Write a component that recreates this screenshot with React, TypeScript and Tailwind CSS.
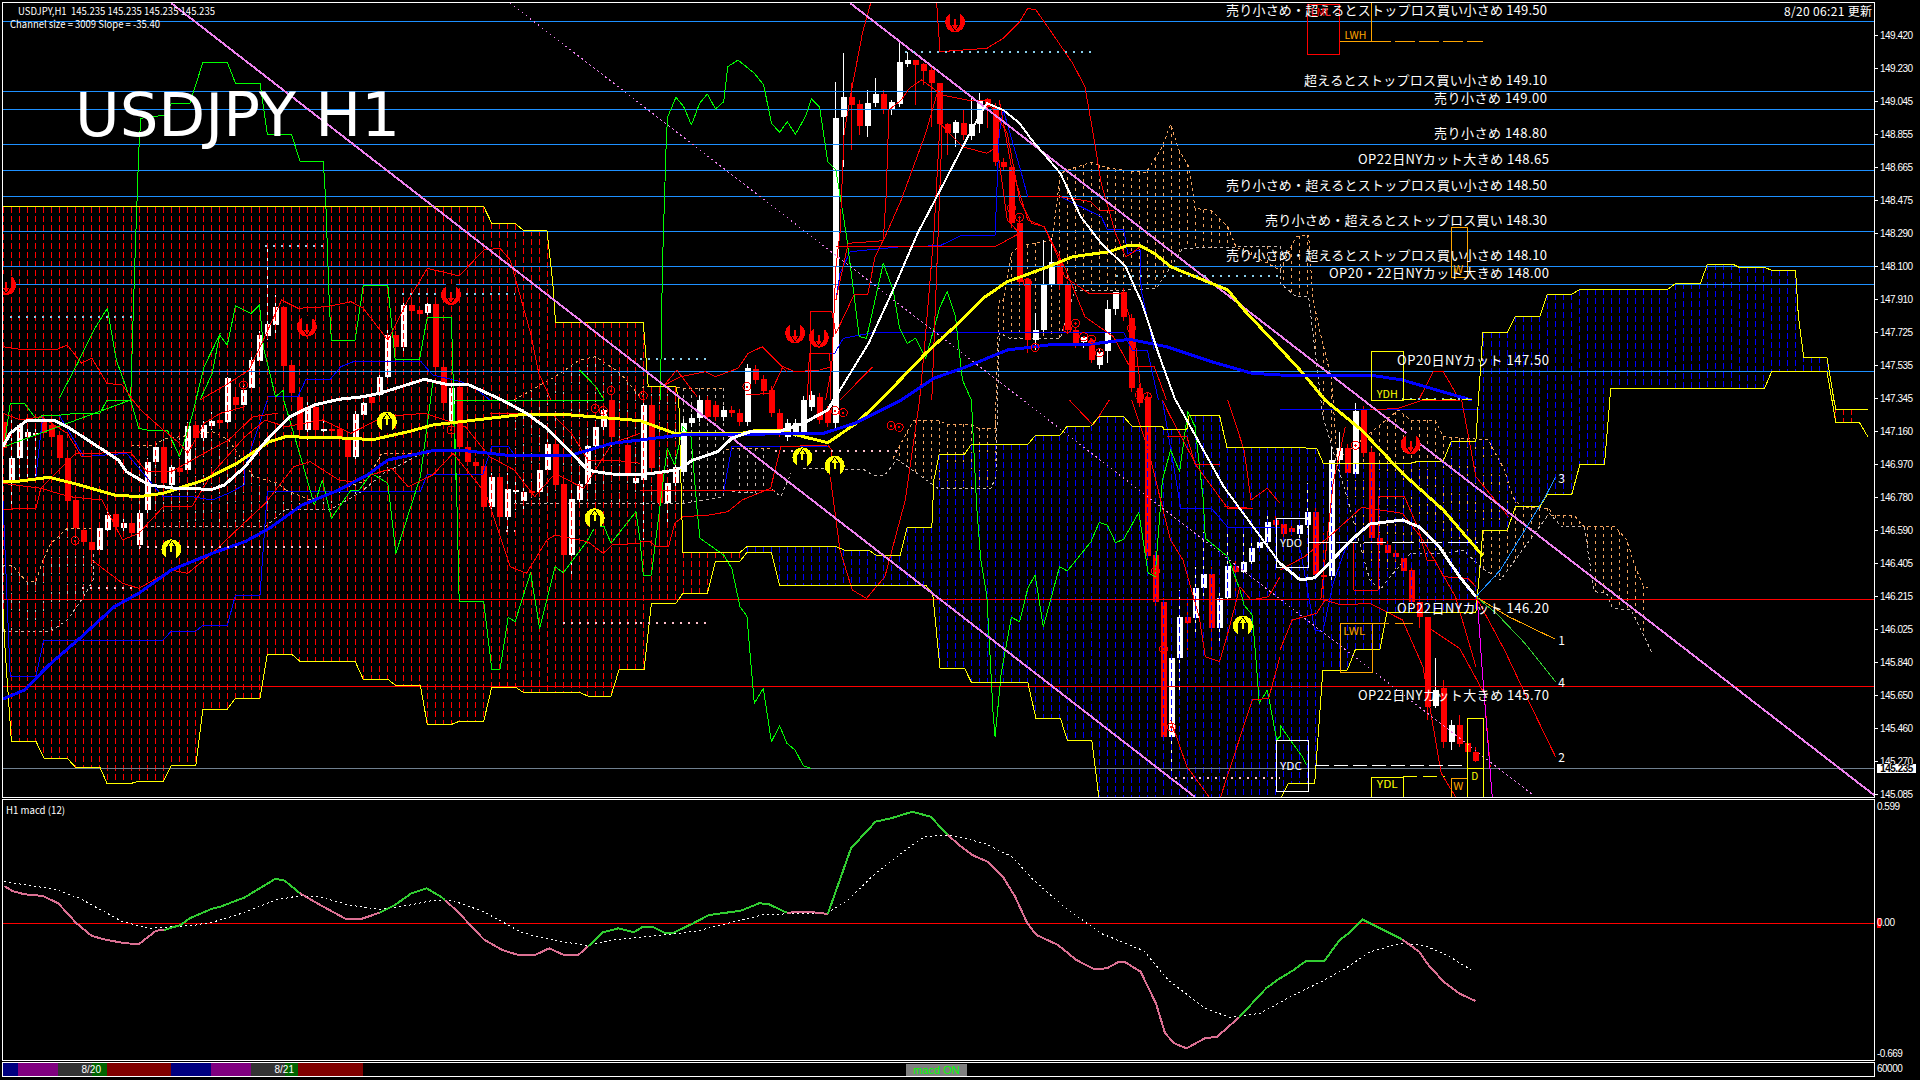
import React from "react";

type Seg = [string, number[]];
const ZONES: Record<string, [number, number, number]> = {
  A: [0, 0, 2.45], B: [640, 0, 2.45], C: [1280, 0, 2.45],
  D: [0, 400, 2.45], E: [640, 400, 2.45], F: [1280, 400, 2.45],
  G: [0, 780, 1.6333], H: [960, 780, 1.6333],
};
const conv = (segs: Seg[]) => {
  const out: [number, number][] = [];
  segs.forEach(([z, n]) => {
    const [x0, y0, sx] = ZONES[z];
    for (let i = 0; i < n.length; i += 2) out.push([x0 + n[i] / sx, y0 + n[i + 1] / 3]);
  });
  return out;
};
const ps = (segs: Seg[]) => conv(segs).map((p) => p[0].toFixed(1) + "," + p[1].toFixed(1)).join(" ");
const pt = (z: string, x: number, y: number) => conv([[z, [x, y]]])[0];
const interp = (p: [number, number][], x: number) => {
  if (x < p[0][0] || x > p[p.length - 1][0]) return null;
  for (let i = 1; i < p.length; i++) {
    if (x <= p[i][0]) {
      const d = p[i][0] - p[i - 1][0];
      return d <= 0 ? p[i][1] : p[i - 1][1] + ((p[i][1] - p[i - 1][1]) * (x - p[i - 1][0])) / d;
    }
  }
  return null;
};

const S1: Seg[] = [
  ["D", [7,620,12,740,28,1024,88,1024,108,1075,165,1075,185,1102,245,1102,262,1150,322,1150,340,1144,400,1144,420,1096,480,1096,497,928,557,928,577,895,637,895,655,763,715,763,735,784,870,784,890,838,950,838,970,857,1030,857,1047,973,1107,973,1125,964,1185,964,1205,861,1262,861,1282,877,1420,877,1440,888,1497,888,1517,808,1568,808]],
  ["E", [10,808,28,610,88,610,105,580,165,580,185,484,245,484,262,457,322,457,342,556,700,556,717,580,735,805,795,805,812,847,950,847,970,955,1030,955,1047,1021,1107,1021,1125,1200]],
  ["F", [0,1200,20,1150,85,1150,105,810,165,810,185,748,245,748,262,636,480,636,490,500,497,390,557,390,577,320,637,320,655,283,715,283,735,193,795,193,808,0]],
  ["C", [810,1165,1187,1165,1205,1114,1340,1114]],
  ["F", [1362,68,1420,68,1440,110]],
];
const S2: Seg[] = [
  ["A", [7,620,1185,620,1205,670,1262,670,1282,691,1340,691,1350,800,1355,860,1361,967,1568,967]],
  ["B", [8,967,20,1160,88,1160]],
  ["E", [95,0,105,457,245,457,262,440,480,440,500,450,560,450,580,467,637,467,655,382,715,382,720,240,733,163,795,163,812,133,950,133,970,105,1030,105,1045,80,1105,78,1125,50,1185,50,1205,78,1280,78,1283,88,1340,88,1345,47,1420,47,1438,142,1568,142]],
  ["F", [90,145,106,190,322,190,340,183,400,183,420,123,480,123,485,20,497,-203]],
  ["C", [557,997,577,948,637,948,655,883,715,883,735,868,950,868,970,850,1030,850,1047,793,1110,793,1125,802,1187,802,1203,810,1263,810,1270,950,1283,1072,1340,1072,1345,1110,1357,1200]],
  ["F", [1362,28,1440,28]],
];

const orange = "#f4a460";
const pale = "#c8b8b0";
const CL2: { u: Seg[]; l: Seg[]; c: string }[] = [
  { u: [["D", [7,495,30,495,65,545,88,545,105,480,125,430,165,385,225,385]]], l: [["D", [7,693,125,693,165,660,205,590,228,540,228,460]]], c: pale },
  { u: [["D", [320,135,380,135,400,118,520,95,560,120,620,228,680,250,700,270]]], l: [["D", [340,380,650,380,700,328]]], c: pale },
  { u: [["D", [700,270,760,300,830,270,900,240,935,160,1050,160]]], l: [["D", [700,328,810,328,880,280,940,220,1050,150]]], c: "#e8d8c8" },
  { u: [["A", [1260,1200,1360,1130,1420,1080,1460,1070,1520,1120,1568,1190]], ["B", [8,1160,88,1160,100,1165,205,1165]]], l: [["A", [1260,1510,1568,1510]], ["B", [8,1510,110,1510,205,1490]]], c: pale },
  { u: [["E", [210,150,225,145,320,145]]], l: [["E", [225,275,290,280,320,265,345,290,370,220]]], c: pale },
  { u: [["E", [620,175,670,60,730,60,750,72,810,72,830,85,870,85,880,-300]], ["B", [890,900,910,760,930,738,1010,720,1030,520,1060,505,1105,487,1150,505,1240,518,1280,440,1300,372,1320,450,1345,500,1360,625,1400,632,1440,680,1460,740,1568,810]], ["C", [0,810,40,710,70,705,80,890,95,980,125,1130,130,1200]], ["F", [140,180,290,30,320,60,380,60,400,110,510,120,550,210,570,290,590,320,660,325,665,345,720,345,745,380,820,380,850,420,870,500,890,558,910,568]]],
    l: [["E", [400,205,550,210,570,225,600,225,630,178,730,265,860,265,872,230,880,-200]], ["B", [905,1015,1030,1015,1065,870,1190,870,1265,865,1330,745,1568,738]], ["C", [0,850,40,890,70,890]], ["F", [105,50,165,295,220,540,245,570,270,530,320,460,400,460,450,450,490,500,540,540,600,440,660,340,690,380,745,380,770,575,800,580,815,625,860,630,885,690,910,755]]], c: orange },
];

const REDS: Seg[][] = [
  [["A", [7,1040,60,1050,140,1048,165,1035,200,1090,225,1075,262,1150,300,1155,325,1200]], ["D", [345,30,400,90,440,130,460,160,500,70,540,40,600,20]]],
  [["A", [490,1200,560,1150,610,1110,645,1020,690,900,730,925,800,920,860,905,890,925,950,1020,1000,900,1047,805,1125,828,1185,750,1225,745,1250,780,1300,1000,1320,1120,1350,1200]]],
  [["D", [7,40,50,60,100,50,165,100,200,170,225,170,225,480,300,550,340,565,420,510,460,520,520,460,580,390,650,310,720,200,760,185,830,240,860,245,960,205,1000,260,1060,225,1110,160,1190,280,1250,500,1290,520,1340,420,1360,405,1440,425,1478,460,1500,435,1568,430]]],
  [["D", [7,250,100,265,170,290,250,300,300,420,340,400,400,320,470,320,520,220,600,110,650,60,700,80,790,60,860,100,940,50,1040,40,1140,80,1200,170,1260,210,1310,290,1360,220,1430,265,1500,130,1568,100]]],
  [["D", [7,328,88,325,100,265,185,160,320,158,360,215,420,215,500,160,560,120,620,50,680,40]]],
  [["D", [1200,40,1350,40,1400,100,1440,180,1500,180,1568,190]]],
  [["B", [565,10,545,100,520,260,500,400,490,700,480,800,470,1100,455,1200]]],
  [["B", [727,10,735,155,850,145,890,115,930,65,950,25,970,30,1010,100,1060,190,1090,260,1110,400,1130,550,1165,700,1190,770,1205,760,1225,740]]],
  [["B", [417,1200,417,935,470,935,480,1000,525,883,558,883,576,770,596,720,603,590,610,330,640,300,660,265,690,240,740,285,800,300,850,300,900,400,930,600,960,670,990,680,1020,760,1040,830,1100,880,1180,880,1210,990,1230,1200]]],
  [["B", [480,900,510,730,596,722,640,600,700,400,735,250,740,400,715,1200]]],
  [["B", [685,1200,700,1000,720,700,735,370,790,440,850,460,875,440,900,660,930,700,870,740,480,740]]],
  [["B", [410,1200,415,1060,465,1060,468,1200]]],
  [["B", [570,1100,490,1200]]],
  [["B", [260,1185,320,1180,350,1100,380,1115,440,1110,470,1100]]],
  [["B", [140,1190,90,1110,60,1155,100,1130,160,1115,185,1130,240,1105,265,1060,300,1040,360,1115]]],
  [["B", [950,590,1030,590,1105,605,1125,630,1160,630]]],
  [["B", [880,300,910,500,950,660,990,680,1040,800,1090,950,1160,1010,1200,1100,1260,1100,1290,1200]]],
  [["E", [685,0,650,300,600,530,555,595,520,570,490,450,465,220,470,150,460,135,345,140,320,265,250,300,215,335,170,345,105,350,85,370,70,440,40,440,25,425,0,425]]],
  [["E", [1052,0,1075,30,1110,75,1150,0]]],
  [["E", [1205,0,1245,150,1300,420,1330,480,1370,650,1385,770,1420,785,1440,700,1470,560,1497,600,1540,590,1568,530]]],
  [["E", [1280,0,1300,50,1365,200,1440,325,1500,325,1430,320]]],
  [["E", [1440,0,1480,150,1497,300,1537,265,1568,310]]],
  [["E", [1300,960,1340,1100,1400,1200]]],
  [["E", [1420,1200,1500,900,1540,895,1568,770]]],
  [["E", [0,270,330,272]]],
  [["E", [1290,110,1340,110,1360,192,1420,192]]],
  [["F", [0,750,30,660,90,640,110,600,150,615,220,610,300,660,350,800,395,1120,430,1190]]],
  [["F", [180,430,180,570,240,570,240,290,305,290,340,390,360,480,380,480,400,530,460,535,480,560]]],
  [["F", [360,680,440,745,500,880,515,1100]]],
  [["F", [0,510,60,470,130,400,200,322,300,340,350,420,430,590,480,800]]],
  [["F", [445,0,480,230,560,350]]],
  [["F", [100,600,130,250,160,80]]],
  [["C", [340,1200,375,1115,400,1115,440,1200]]],
  [["F", [440,0,350,0,290,25,220,30]]],
];
const BLUES: Seg[][] = [
  [["D", [7,295,25,830,88,830,107,720,400,720,420,693,480,693,497,676,557,676,577,585,637,585,655,275,1030,275,1047,222,1183,222,1205,138,1245,138,1260,165]]],
  [["D", [88,230,105,45,145,45,205,170,310,160,375,255,400,290,470,290,520,300,560,280,598,255,598,210,655,0]]],
  [["A", [655,1188,730,1190,750,1137,810,1137,835,1100,870,1083,1030,1083,1060,1125,1130,1145,1165,1165,1200,1200]]],
  [["B", [418,1200,418,1060,477,1060,498,1015,575,997,1185,997,1205,1050,1243,1050,1270,1200]]],
  [["B", [480,900,490,820,515,755,640,740,735,737,790,705,870,705,880,400,890,330,930,500,950,590,1030,590,1130,650,1145,688,1185,688,1195,760,1225,750,1228,870,1260,1050]]],
  [["E", [205,275,225,140,460,140]]],
  [["E", [1280,0,1325,325,1400,325,1440,382,1568,382]]],
  [["F", [0,28,490,28]]],
  [["F", [50,450,85,690,105,695,130,550,165,430]]],
];
const GREENS: Seg[][] = [
  [["A", [320,1200,330,800,340,450,345,355,405,345,420,310,465,310,497,187,557,187,577,250,637,250,655,402,714,402,735,484,792,484,798,600,807,920,812,1020,870,1020,890,856,950,856,968,1077,1028,1077,1047,951,1106,951,1110,1130,1112,1200]], ["D", [1120,330,1125,605,1185,605,1205,808,1225,808,1245,652,1262,665,1300,518,1322,685,1360,500,1380,518,1440,420,1458,380,1480,380,1497,430,1558,335,1568,420]], ["E", [8,525,28,525,67,145,85,195,105,80,125,110,140,330,147,415,205,465,225,505,245,620,262,648,280,910,302,865,322,1025,342,977,360,1030,380,1050,400,1097,418,1105]]],
  [["A", [145,1195,190,1090,230,990,263,925,285,1080,320,1200]], ["D", [10,140,25,10,60,10,90,60,105,45,150,45,185,40,245,40,262,0,320,0,340,85,360,90,410,90,440,170,470,50,500,-100,540,-200]]],
  [["A", [490,1200,520,1120,538,1005,557,1035,577,918,615,940,636,915,645,1040,675,1190,695,1170]], ["D", [695,0,740,185,770,315,790,240,812,355,860,270,880,270,910,220,950,250,970,460,1030,230,1060,-50]]],
  [["B", [50,1200,55,800,65,400,68,350,88,292,107,320,126,375,146,310,165,282,185,327,205,305,215,200,240,180,280,220,303,255,322,370,342,397,361,365,381,403,405,350,420,297,440,322,460,485,480,510,505,700,525,890,537,1010,555,1015,596,790,620,870,636,985,655,1030,675,1015,700,1075,735,920,753,875,773,950,790,1140,810,1195]], ["E", [812,0,825,320,835,480,850,590,865,940,870,1010,885,820,910,652,930,665,950,565,968,525,988,680,1028,500,1047,513,1105,425,1125,367,1145,375,1165,428,1185,418,1222,337,1245,520,1262,530,1280,240,1300,150,1322,215,1342,35,1360,80,1380,300,1385,415,1440,470,1470,570,1480,615,1500,645,1510,790,1517,910,1537,870,1560,1020,1568,1010]], ["F", [0,975,25,1020,55,1070,65,1096]]],
  [["A", [1420,1110,1460,1160,1480,1200]], ["D", [1110,0,1120,330]]],
];

// [x, top, bottom, white?, high?, low?]
type C = number[];
const CANDLES: [string, C[]][] = [
  ["D", [
    [12,65,145,0],[28,175,240,1,60,330],[48,75,175,1,70,230],[68,95,110,1,70,230],[88,100,105,1,70,230],[107,60,100,0],[126,75,110,0],[146,105,175,0],[165,175,302,0],[185,300,385,0,300,400],[205,390,425,0],[224,425,450,0],[243,385,450,1],[263,345,390,1],[283,342,382,0],[302,368,385,1,340,400],[322,370,400,0],[342,340,435,1],[361,185,330,1],[380,142,185,1],[400,142,250,0],[420,200,255,1],[439,205,215,0],[459,78,210,1],[478,75,115,0],[498,75,115,1],[518,62,78,1,35,90],[537,60,68,0],[557,-65,65,1,-70,75],[577,-10,15,0],[597,-30,15,1],[616,-120,-35,1],[636,-195,-118,1],[655,-228,-192,1,-460,-180],[675,-280,-225,1,-315,-200],[695,-280,-103,0,-280,-60],[714,-105,-20,0],[734,-10,90,0,-20,110],[753,22,90,1,-10,120],[773,22,90,0],[792,88,90,1,60,110],[812,88,92,0],[832,88,115,0],[851,115,170,0,100,260],[871,42,170,1],[890,10,45,1],[910,-10,10,0],[930,-70,-15,1],[950,-195,-70,1,-225,-50],[969,-195,-160,0],[988,-285,-160,1],[1008,-285,-268,0],[1028,-270,-258,0],[1047,-288,-260,1],[1067,-288,-100,0],[1087,-100,10,0],[1107,-35,70,1],[1126,-40,140,0],[1146,140,185,0],[1165,185,197,0],[1185,197,322,0],[1204,232,322,1],[1224,232,352,0],[1243,268,350,1,220,395],[1263,270,274,1,230,330],[1283,275,302,1,240,345],[1302,272,275,0],[1322,210,275,1],[1341,132,210,1],[1361,132,255,0],[1381,252,465,0,225,670],[1400,298,465,1,270,540],[1420,253,300,1],[1439,138,253,1],[1459,82,138,1],[1478,30,82,1],[1498,0,110,0],[1517,125,130,0],[1537,135,222,0],[1556,235,250,1],
  ]],
  ["E", [
    [8,15,240,1,0,420],[28,15,205,0],[48,215,308,0,200,420],[67,250,310,1,240,380],[87,200,250,1],[106,68,215,1],[125,55,70,1],[145,0,55,1],[165,0,50,0],[185,15,50,0],[204,30,52,1],[224,30,40,0],[243,40,65,0],[263,-95,65,1],[283,-92,-60,0],[302,-62,-28,0],[322,-30,40,0],[341,38,100,0],[361,70,110,1],[380,70,100,1],[400,0,100,1],[420,-15,20,1],[439,-10,60,0],[459,30,68,0],[478,-845,70,1,-955,90],
    [498,-908,-848,1,-1040,-700],[518,-908,-885,0,-950,-750],[538,-888,-822,0,-900,-795],[557,-890,-822,1,-930,-790],[577,-918,-890,1,-965,-880],[596,-918,-870,0],[616,-893,-870,1,-900,-855],[636,-1013,-888,1,-1070,-880],[655,-1020,-1008,1,-1045,-1000],[675,-1020,-1005,0,-1020,-885],[695,-1008,-987,0,-1010,-945],[714,-990,-950,0,-1000,-820],[734,-950,-827,0,-950,-780],[753,-827,-802,0,-830,-735],[773,-833,-802,1,-840,-760],[792,-831,-795,0,-870,-780],[812,-827,-792,1,-910,-780],[832,-900,-827,1,-920,-800],[851,-902,-878,0,-905,-815],[871,-878,-713,0],[890,-715,-698,0],[910,-698,-530,0,-700,-515],[930,-530,-355,0],[949,-362,-180,0,-365,-140],[969,-210,-180,1,-260,-150],[988,-345,-210,1,-480,-200],[1008,-415,-345,1,-485,-340],[1028,-415,-345,0,-440,-330],[1047,-345,-210,0],[1067,-210,-170,0,-215,-155],[1087,-190,-175,1,-190,-155],[1106,-180,-120,0,-180,-110],[1126,-145,-105,1],[1145,-273,-148,1,-300,-110],[1165,-323,-272,1,-325,-255],[1185,-325,-250,0],[1204,-245,-35,0],[1224,-35,10,0],[1243,-10,468,0],[1263,465,605,0],[1283,605,1010,0],[1302,775,1010,1,775,1130],[1322,652,775,1,570,880],[1341,652,668,0,600,750],[1361,565,655,1,500,700],[1380,522,565,1,395,600],[1400,522,685,0,500,760],[1420,595,685,1,560,730],[1439,498,595,1,395,600],[1459,497,515,0,480,580],[1478,485,515,1,385,530],[1498,445,485,1,420,500],[1517,425,445,1],[1537,365,425,1,340,440],[1556,360,375,0],
  ]],
  ["F", [
    [8,372,403,0],[28,385,395,0],[48,375,403,1],[67,335,375,1,250,385],[87,335,525,0],[106,525,530,0,400,600],[126,180,527,1,140,545],[146,145,180,1,95,190],[165,145,220,0],[185,32,222,1,10,230],[204,30,158,0],[224,155,415,0],[243,415,435,0],[263,435,458,0],[283,458,472,0],[302,475,512,0],[322,510,605,0],[341,605,650,0,600,685],[361,650,920,0,650,960],[380,870,918,1,775,925],[400,865,1025,0,840,1045],[420,975,1025,1,960,1050],[439,975,1032,0,945,1040],[459,1030,1055,0],[478,1055,1082,0,1040,1085],
  ]],
];

const RINGS: [string, number, number][] = [
  ["D",184,422],["B",262,1160],["A",597,1155],["A",1497,1172],["B",8,1187],["E",478,32],["E",498,38],["E",615,77],["E",635,82],["B",910,625],["B",930,652],["B",949,848],["B",968,1042],["B",1047,985],["B",1067,970],["B",1087,1010],["B",1106,1018],["B",1126,1058],["B",1204,985],["B",1223,1185],["B",1243,1190],["D",1105,90],["D",1458,25],["D",1478,32],["E",1263,513],["E",1283,747],["E",1302,982],["F",185,136],
];
const UPS: [string, number, number][] = [["D",420,448],["D",948,65],["D",1457,355],["E",398,172],["E",477,197],["E",1477,677]];
const DOWNS: [string, number, number][] = [["A",15,855],["A",752,980],["A",1105,885],["B",380,1000],["B",438,1013],["B",772,67],["F",320,133]];

const Sig = ({ z, flip, color }: { z: [string, number, number]; flip: boolean; color: string }) => {
  const [x, y] = pt(z[0], z[1], z[2]);
  return (
    <g transform={`translate(${x.toFixed(1)} ${y.toFixed(1)}) scale(1 ${flip ? -1 : 1})`}>
      <circle r={10} fill={color} />
      <path d="M-5 11 L-5 -2 L-3 -5 L0 -9 L3 -5 L5 -2 L5 11 Z" fill="#000" />
      <path d="M-1 3 L-1 -3 L-3 -3 L0 -8 L3 -3 L1 -3 L1 3 Z" fill={color} />
    </g>
  );
};

const Pl = ({ s, c, w = 1, d }: { s: Seg[]; c: string; w?: number; d?: string }) => (
  <polyline points={ps(s)} fill="none" stroke={c} strokeWidth={w} strokeDasharray={d} strokeLinejoin="round" />
);

const HL = ({ y, c, w = 1 }: { y: number; c: string; w?: number }) => (
  <rect x={3} y={Math.floor(y)} width={1871} height={w} fill={c} />
);

const Dots = ({ z, x1, x2, y, c }: { z: string; x1: number; x2: number; y: number; c: string }) => {
  const a = pt(z, x1, y);
  const b = pt(z, x2, y);
  return <line x1={a[0]} x2={b[0]} y1={a[1]} y2={a[1]} stroke={c} strokeWidth={2} strokeDasharray="2 6" />;
};

const Box = ({ z, x1, y1, x2, y2, c }: { z: string; x1: number; y1: number; x2: number; y2: number; c: string }) => {
  const a = pt(z, x1, y1);
  const b = pt(z, x2, y2);
  return <rect x={Math.round(a[0])} y={Math.round(a[1])} width={Math.round(b[0] - a[0])} height={Math.round(b[1] - a[1])} fill="none" stroke={c} strokeWidth={1} />;
};

const Label = ({ z, x, y, c, w, t }: { z: string; x: number; y: number; c: string; w: number; t: string }) => {
  const a = pt(z, x, y);
  return (
    <text x={a[0]} y={a[1]} fill={c} fontSize={10} textAnchor="middle" dominantBaseline="central" textLength={w} lengthAdjust="spacingAndGlyphs" shapeRendering="auto">
      {t}
    </text>
  );
};

const NOTES: [string, number, number, number][] = [
  ["売り小さめ・超えるとストップロス買い小さめ 149.50", 9.7, 1547, 321],
  ["超えるとストップロス買い小さめ 149.10", 79.7, 1547, 243],
  ["売り小さめ 149.00", 97.7, 1547, 113],
  ["売り小さめ 148.80", 132.3, 1547, 113],
  ["OP22日NYカット大きめ 148.65", 158.3, 1549, 191],
  ["売り小さめ・超えるとストップロス買い小さめ 148.50", 184.3, 1547, 321],
  ["売り小さめ・超えるとストップロス買い 148.30", 219, 1547, 282],
  ["売り小さめ・超えるとストップロス買い小さめ 148.10", 254.3, 1547, 321],
  ["OP20・22日NYカット大きめ 148.00", 272.3, 1549, 220],
  ["OP20日NYカット 147.50", 359, 1549, 152],
  ["OP22日NYカット 146.20", 607.3, 1549, 152],
  ["OP22日NYカット大きめ 145.70", 694.7, 1549, 191],
];

const AXIS = ["149.420","149.230","149.045","148.855","148.665","148.475","148.290","148.100","147.910","147.725","147.535","147.345","147.160","146.970","146.780","146.590","146.405","146.215","146.025","145.840","145.650","145.460","145.270","145.085"];

const MACD: { s: Seg[]; c: string }[] = [
  { c: "#db7093", s: [["G", [7,318,20,333,40,343,70,348,95,370,125,430,150,468,175,480,205,490,227,492,255,452,268,450]]] },
  { c: "#32cd32", s: [["G", [268,450,295,435,310,415,345,387,360,380,400,352,450,296,465,302,490,340]]] },
  { c: "#db7093", s: [["G", [490,340,520,372,565,417,590,417,620,398]]] },
  { c: "#32cd32", s: [["G", [620,398,645,375,672,340,697,325,720,350,727,360]]] },
  { c: "#db7093", s: [["G", [727,360,750,400,790,478,820,510,845,524,875,524,897,505,920,524,945,524,960,500]]] },
  { c: "#32cd32", s: [["G", [960,500,985,457,1010,445,1035,457,1050,440,1065,440,1085,458,1100,458,1130,432,1158,405,1210,392,1240,370,1255,372,1285,398]]] },
  { c: "#db7093", s: [["G", [1285,398,1320,395,1352,402]]] },
  { c: "#32cd32", s: [["G", [1352,402,1390,205,1430,125,1455,115,1490,95,1520,110,1548,165]]] },
  { c: "#db7093", s: [["G", [1548,165,1568,197]], ["H", [20,225,45,245,70,290,90,350,110,430,125,465,160,495,190,540,220,568,240,565,258,547,270,547,295,575,320,670,335,760,350,790,370,805,400,775,420,770,456,712]]] },
  { c: "#32cd32", s: [["H", [456,712,500,625,520,598,545,570,565,543,595,543,620,480,635,460,657,418,722,478]]] },
  { c: "#db7093", s: [["H", [722,478,750,515,765,555,790,605,815,640,842,663]]] },
];
const SIGNAL: Seg[] = [
  ["G", [7,305,90,328,130,355,200,425,245,445,320,435,350,425,395,400,450,360,490,347,520,350,570,375,620,388,670,375,710,360,740,362,790,395,850,455,880,472,920,485,960,497,1000,480,1100,462,1140,452,1200,425,1250,403,1350,400,1385,360,1430,280,1490,195,1510,170,1550,165,1568,172]],
  ["H", [40,190,85,230,120,300,170,380,230,460,300,512,340,600,400,685,440,712,490,700,540,650,590,605,630,565,670,515,720,490,760,497,800,530,835,570]],
];

function MainChart() {
  const s1 = conv(S1);
  const s2 = conv(S2);
  const kumo: React.ReactNode[] = [];
  for (let k = 0; k < 232; k++) {
    const x = 3.5 + 8 * k;
    const a = interp(s1, x);
    const b = interp(s2, x);
    if (a === null || b === null || x > 1870) continue;
    const top = Math.min(a, b);
    const bot = Math.min(Math.max(a, b), 798);
    const col = x < 745 || x > 1830 ? "#ff0000" : "#0000ff";
    kumo.push(<line key={k} x1={x} x2={x} y1={top} y2={bot} stroke={col} strokeDasharray="6 3" />);
  }
  const kumo2: React.ReactNode[] = [];
  CL2.forEach((c, i) => {
    const u = conv(c.u);
    const l = conv(c.l);
    for (let k = 0; k < 232; k++) {
      const x = 3.5 + 8 * k;
      const a = interp(u, x);
      const b = interp(l, x);
      if (a === null || b === null) continue;
      kumo2.push(<line key={i + "-" + k} x1={x} x2={x} y1={a} y2={b} stroke={c.c} strokeDasharray="3 4" />);
    }
    kumo2.push(<Pl key={i + "u"} s={c.u} c={orange} d="3 3" />);
    kumo2.push(<Pl key={i + "l"} s={c.l} c={pale} d="3 3" />);
  });
  const candles: React.ReactNode[] = [];
  CANDLES.forEach(([z, list]) =>
    list.forEach((r, i) => {
      const [zx, t, b, w, hi, lo] = r;
      const p = pt(z, zx, t);
      const k = Math.round((p[0] - 3.5) / 8);
      const X = Math.round(3.5 + 8 * k);
      const q = pt(z, zx, b);
      const h = pt(z, zx, hi === undefined ? t - 12 : hi);
      const l = pt(z, zx, lo === undefined ? b + 12 : lo);
      const col = w ? "#ffffff" : "#ff0000";
      candles.push(
        <g key={z + i}>
          <rect x={X - 1} y={h[1]} width={1} height={Math.max(1, l[1] - h[1])} fill={col} />
          <rect x={X - 3} y={p[1]} width={6} height={Math.max(2, q[1] - p[1])} fill={col} />
        </g>
      );
    })
  );
  const rp = (z: string, y: number) => pt(z, 0, y)[1];
  return (
    <svg viewBox="3 3 1871 794" width={1871} height={794} className="block" shapeRendering="crispEdges">
      {kumo2}
      {candles}
      {kumo}
      {[21, 91, 109, 144, 170, 196, 231, 266, 284, 371].map((y) => (
        <HL key={y} y={y} c="#1e90ff" />
      ))}
      <HL y={599} c="#ff0000" />
      <HL y={686} c="#ff0000" />
      <HL y={768} c="#708090" />

      {BLUES.map((s, i) => <Pl key={i} s={s} c="#0000ff" />)}
      {GREENS.map((s, i) => <Pl key={i} s={s} c="#00ff00" />)}
      {REDS.map((s, i) => <Pl key={i} s={s} c="#ff0000" />)}
      <Pl s={S2} c="#ffff00" />
      <Pl s={S1} c="#ffff00" />

      <line x1={510} y1={3} x2={1533} y2={795} stroke="#ee82ee" strokeDasharray="2 3" />
      <line x1={171} y1={3} x2={1195} y2={797} stroke="#ee82ee" strokeWidth={2} />
      <line x1={850} y1={3} x2={1874} y2={795} stroke="#ee82ee" strokeWidth={2} />
      <Pl s={[["F", [483,590,495,800,520,1190]]]} c="#ff00ff" />

      <Pl c="#ffff00" w={3} s={[["D", [7,243,50,243,120,232,180,250,280,285,340,290,400,280,500,240,580,190,660,125,700,110,870,115,910,120,1000,95,1060,75,1200,55,1290,42,1400,45,1568,62]], ["E", [85,100,250,100,280,92,345,92,400,110,460,128,530,70,590,0]], ["B", [700,1060,780,970,840,895,900,845,1000,800,1060,770,1150,755,1190,738,1225,737,1260,760,1300,800,1380,840,1440,870,1480,930,1568,1045]], ["C", [60,1125,110,1200]], ["F", [200,90,300,220,400,330,497,468]]]} />
      <Pl c="#0000ff" w={3} s={[["D", [7,897,60,870,120,795,200,710,280,620,340,580,420,510,520,460,600,425,660,385,740,315,830,270,900,225,950,180,1060,152,1140,152,1260,168,1400,165,1500,130,1568,120]], ["E", [100,105,450,100,530,68,640,0]], ["B", [720,1135,800,1100,900,1050,1000,1035,1100,1033,1200,1018,1290,1040,1400,1085,1500,1120,1568,1125]], ["C", [180,1128,220,1125,300,1140,440,1190,470,1200]]]} />
      <Pl c="#ffffff" w={3} s={[["D", [7,140,25,100,65,62,130,60,165,80,290,180,310,215,365,255,430,265,520,268,550,255,600,200,650,125,710,50,770,15,830,-2]], ["A", [890,1190,930,1180,1040,1138,1090,1152,1150,1155,1230,1200]], ["D", [1290,40,1340,85,1385,140,1440,210,1460,215,1500,222,1568,225]], ["E", [90,210,130,180,190,155,225,115,270,95,340,95,400,70,460,30,480,-10]]]} />
      <Pl c="#ffffff" w={2} s={[["E", [480,-10]], ["B", [560,1030,620,870,680,700,740,560,810,395,850,310,890,330,930,370,960,420,1030,520,1080,650,1130,730,1190,800,1230,910,1270,1060,1310,1195]], ["E", [1430,260,1568,490]]]} />
      <Pl c="#ffffff" w={3} s={[["E", [1568,490]], ["F", [50,540,85,533,120,490,175,420,220,372,300,360,340,380,390,440,440,530,480,590]]]} />

      <Dots z="A" x1={25} x2={325} y={950} c="#87ceeb" />
      <Dots z="A" x1={650} x2={795} y={738} c="#87ceeb" />
      <Dots z="A" x1={985} x2={1262} y={882} c="#87ceeb" />
      <Dots z="B" x1={0} x2={165} y={1077} c="#87ceeb" />
      <Dots z="B" x1={650} x2={1105} y={155} c="#87ceeb" />
      <Dots z="B" x1={1165} x2={1568} y={828} c="#87ceeb" />
      <Dots z="C" x1={300} x2={470} y={1197} c="#87ceeb" />
      <Dots z="D" x1={200} x2={325} y={564} c="#ffc0cb" />
      <Dots z="D" x1={340} x2={795} y={440} c="#ffc0cb" />
      <Dots z="D" x1={1240} x2={1262} y={392} c="#ffc0cb" />
      <Dots z="D" x1={1380} x2={1568} y={668} c="#ffc0cb" />
      <Dots z="E" x1={0} x2={165} y={668} c="#ffc0cb" />
      <Dots z="E" x1={330} x2={635} y={153} c="#ffc0cb" />
      <Dots z="E" x1={1310} x2={1568} y={1135} c="#ffc0cb" />

      <Pl s={[["F", [480,590,540,510,600,390,650,290,675,232]]]} c="#1e90ff" />
      <Pl s={[["F", [480,590,560,650,675,718]]]} c="#ffa500" />
      <Pl s={[["F", [480,590,530,640,600,730,675,845]]]} c="#32cd32" />
      <Pl s={[["F", [480,590,550,750,600,880,675,1070]]]} c="#ff0000" />

      {/* level boxes */}
      <Box z="C" x1={67} y1={12} x2={146} y2={163} c="#ff0000" />
      <Pl s={[["C", [146,123,224,123,224,5]]]} c="#ffa500" />
      <Pl s={[["C", [224,123,497,123]]]} c="#ffa500" d="20 4" />
      <Box z="C" x1={420} y1={680} x2={460} y2={830} c="#ffa500" />
      <Box z="C" x1={224} y1={1052} x2={302} y2={1200} c="#ffff00" />
      <Pl s={[["C", [300,1197,470,1197]]]} c="#ffff00" d="14 6" />
      <Box z="F" x1={-11} y1={355} x2={68} y2={502} c="#ffffff" />
      <Pl s={[["F", [68,427,485,427]]]} c="#ffffff" d="22 6" />
      <Box z="F" x1={146} y1={670} x2={224} y2={817} c="#ffa500" />
      <Pl s={[["F", [224,670,325,670]]]} c="#ffa500" d="18 6" />
      <Box z="F" x1={-11} y1={1020} x2={68} y2={1172} c="#ffffff" />
      <Pl s={[["F", [85,1096,460,1096]]]} c="#ffffff" d="14 5" />
      <Box z="F" x1={224} y1={1130} x2={302} y2={1220} c="#ffff00" />
      <Pl s={[["F", [302,1130,405,1130]]]} c="#ffff00" d="14 6" />
      <Box z="F" x1={420} y1={1135} x2={460} y2={1220} c="#ffa500" />
      <Box z="F" x1={459} y1={955} x2={498} y2={1220} c="#ffff00" />
      <Pl s={[["F", [459,1105,498,1105]]]} c="#ffff00" />

      {RINGS.map((r, i) => {
        const p = pt(r[0], r[1], r[2]);
        return (
          <g key={i}>
            <circle cx={p[0]} cy={p[1]} r={4} fill="none" stroke="#ff0000" strokeWidth={1} />
            <circle cx={p[0]} cy={p[1]} r={1.2} fill="#ff0000" />
          </g>
        );
      })}
      {UPS.map((z, i) => <Sig key={i} z={z} flip={false} color="#ffff00" />)}
      {DOWNS.map((z, i) => <Sig key={i} z={z} flip={true} color="#ff0000" />)}

      <g className="fill-white" shapeRendering="auto">
        <text x={18} y={10} fontSize={10} dominantBaseline="central" textLength={197} lengthAdjust="spacingAndGlyphs" xmlSpace="preserve">USDJPY,H1  145.235 145.235 145.235 145.235</text>
        <text x={10} y={23} fontSize={10} dominantBaseline="central" textLength={150} lengthAdjust="spacingAndGlyphs">Channel size = 3009 Slope = -35.40</text>
        <text x={75} y={136} fontSize={60} textLength={325} lengthAdjust="spacingAndGlyphs" className="font-['DejaVu_Sans',sans-serif]">USDJPY H1</text>
        <text x={1872} y={10} fontSize={12} textAnchor="end" dominantBaseline="central" textLength={88}>8/20 06:21 更新</text>
        {NOTES.map(([t, y, x, w]) => (
          <text key={t} x={x} y={y} fontSize={13} textAnchor="end" dominantBaseline="central" textLength={w}>{t}</text>
        ))}
        {[["1", 718], ["4", 845], ["2", 1070], ["3", 232]].map(([t, y]) => (
          <text key={t as string} x={1280 + 690 / 2.45} y={rp("F", y as number)} fontSize={12} textAnchor="middle" dominantBaseline="central">{t}</text>
        ))}
      </g>
      <Label z="C" x={100} y={35} c="#ff0000" w={20} t="LML" />
      <Label z="C" x={185} y={102} c="#ffa500" w={22} t="LWH" />
      <Label z="C" x={437} y={805} c="#ffa500" w={10} t="W" />
      <Label z="C" x={263} y={1180} c="#ffff00" w={21} t="YDH" />
      <Label z="F" x={27} y={427} c="#ffffff" w={22} t="YDO" />
      <Label z="F" x={182} y={692} c="#ffa500" w={22} t="LWL" />
      <Label z="F" x={27} y={1096} c="#ffffff" w={22} t="YDC" />
      <Label z="F" x={263} y={1150} c="#ffff00" w={21} t="YDL" />
      <Label z="F" x={437} y={1155} c="#ffa500" w={10} t="W" />
      <Label z="F" x={477} y={1125} c="#ffff00" w={7} t="D" />
    </svg>
  );
}

function MacdChart() {
  return (
    <svg viewBox="3 800 1871 260" width={1871} height={260} className="block" shapeRendering="crispEdges">
      <rect x={3} y={923} width={1871} height={1} fill="#ff0000" />
      <polyline points={ps(SIGNAL)} fill="none" stroke="#ffffff" strokeDasharray="2 3" />
      {MACD.map((m, i) => (
        <polyline key={i} points={ps(m.s)} fill="none" stroke={m.c} strokeWidth={2} />
      ))}
      <text x={6} y={809} fontSize={10} fill="#ffffff" dominantBaseline="central" textLength={59} lengthAdjust="spacingAndGlyphs" shapeRendering="auto">H1 macd (12)</text>
    </svg>
  );
}

export default function App() {
  return (
    <div className="w-[1920px] h-[1080px] bg-black overflow-hidden pl-[2px] pt-[2px] text-white font-['Noto_Sans_CJK_JP','Liberation_Sans',sans-serif]">
      <div className="flex h-[796px]">
        <div className="w-[1873px] h-full border border-white overflow-hidden shrink-0">
          <MainChart />
        </div>
        <div className="relative w-[45px] h-full overflow-hidden pt-[17px] font-['Liberation_Sans',sans-serif] text-[10px] tracking-[-0.5px] text-white">
          {AXIS.map((a) => (
            <div key={a} className="flex items-center h-[33px] shrink-0">
              <div className="w-[3px] h-px bg-white mr-[2px]" />
              <span>{a}</span>
            </div>
          ))}
          <div className="absolute left-[2px] top-[762px] w-[39px] h-[9px] bg-white text-black leading-[9px] text-center font-bold">145.235</div>
        </div>
      </div>
      <div className="flex h-[262px] mt-px">
        <div className="w-[1873px] h-full border border-white overflow-hidden shrink-0">
          <MacdChart />
        </div>
        <div className="w-[45px] pt-[2px] pl-[2px] font-['Liberation_Sans',sans-serif] text-[10px] tracking-[-0.5px] leading-[12px]">
          <div className="h-[12px]">0.599</div>
          <div className="relative h-[12px] mt-[104px]">
            <div className="absolute left-0 top-px w-[4px] h-[10px] bg-[#ff0000]" />
            <span className="relative">0.00</span>
          </div>
          <div className="h-[12px] mt-[119px]">-0.669</div>
        </div>
      </div>
      <div className="flex h-[15px] mt-px">
        <div className="w-[1873px] h-full border border-white overflow-hidden shrink-0 flex text-[11px] leading-[13px]">
          <div className="w-[15px] bg-[#000080]" />
          <div className="w-[40px] bg-[#800080]" />
          <div className="w-[49px] bg-[linear-gradient(90deg,#333333_34px,#006400_34px)] flex justify-end pr-[6px] text-white font-['Liberation_Sans',sans-serif] text-[10px]">8/20</div>
          <div className="w-[64px] bg-[#800000]" />
          <div className="w-[40px] bg-[#000080]" />
          <div className="w-[40px] bg-[#800080]" />
          <div className="w-[47px] bg-[linear-gradient(90deg,#333333_34px,#006400_34px)] flex justify-end pr-[4px] text-white font-['Liberation_Sans',sans-serif] text-[10px]">8/21</div>
          <div className="w-[65px] bg-[#800000]" />
          <div className="w-[543px]" />
          <div className="w-[61px] mt-px bg-[#808080] text-[#00ff00] text-center font-['Liberation_Sans',sans-serif] text-[11px] leading-[12px]">macd ON</div>
        </div>
        <div className="w-[45px] pl-[2px] font-['Liberation_Sans',sans-serif] text-[10px] tracking-[-0.5px] leading-[14px]">60000</div>
      </div>
    </div>
  );
}
